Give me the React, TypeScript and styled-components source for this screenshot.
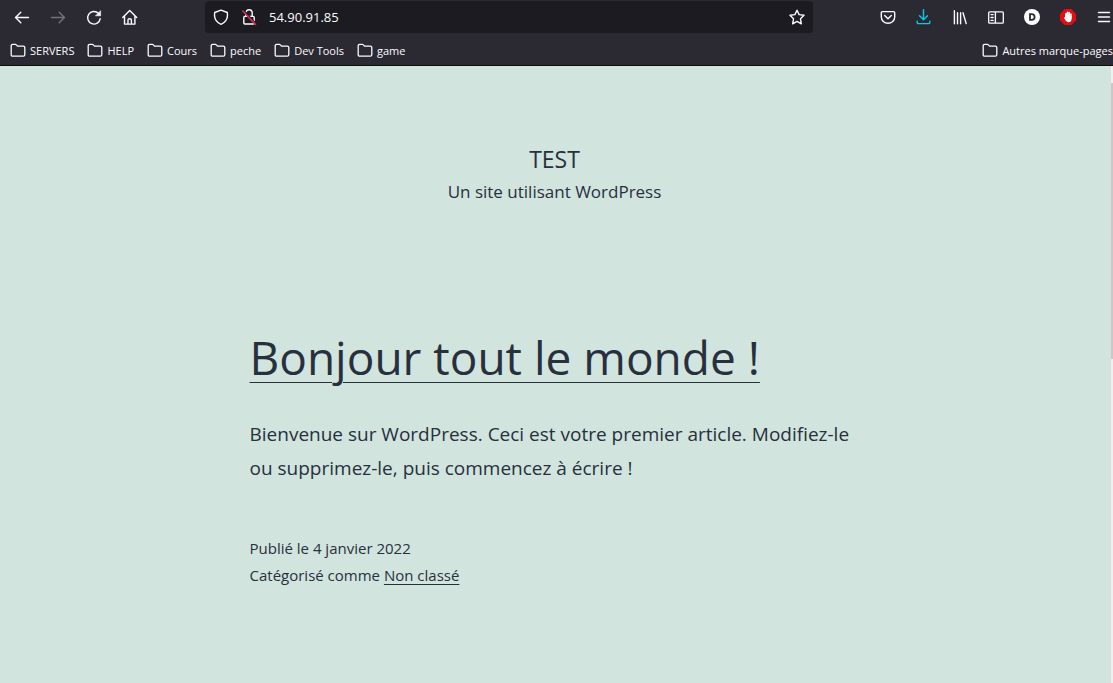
import React from "react";
import styled, { createGlobalStyle } from "styled-components";

const GlobalStyle = createGlobalStyle`
  * { box-sizing: border-box; }
  html, body { margin: 0; height: 100%; overflow: hidden; }
  #root { height: 100%; }
  body { font-family: "Open Sans", "Noto Sans", sans-serif; background: #d1e4dd; }
`;

const Window = styled.div`
  display: flex;
  flex-direction: column;
  height: 100%;
`;

const Chrome = styled.header`
  background: #2b2a33;
  border-bottom: 1px solid #0c0c0d;
  color: #fbfbfe;
  overflow: hidden;
`;

const NavBar = styled.div`
  display: flex;
  align-items: center;
  height: 34px;
  padding: 0 1px 0 14px;
`;

const ButtonGroup = styled.div`
  display: flex;
  align-items: center;
  gap: 20px;
`;

const IconButton = styled.button<{ $color?: string }>`
  display: flex;
  flex: none;
  width: 16px;
  height: 16px;
  padding: 0;
  border: 0;
  background: none;
  color: ${(p) => p.$color ?? "#fbfbfe"};
`;

const Glyph = styled.svg`
  display: block;
  flex: none;
  width: 16px;
  height: 16px;
  overflow: visible;
  fill: none;
  stroke: currentColor;
  stroke-width: 1.4;
  stroke-linecap: round;
  stroke-linejoin: round;
`;

const AddressBar = styled.div`
  display: flex;
  flex: 1;
  align-items: center;
  gap: 12px;
  height: 32px;
  margin: 0 67px;
  padding: 0 8px;
  border-radius: 4px;
  background: #1c1b22;
`;

const AddressInput = styled.input`
  flex: 1;
  min-width: 0;
  padding: 0;
  border: 0;
  outline: 0;
  background: none;
  color: #fbfbfe;
  font: 13px "Open Sans", "Noto Sans", sans-serif;
`;

const Bookmarks = styled.nav`
  display: flex;
  align-items: center;
  gap: 13px;
  height: 31px;
  padding: 2px 0 0 10px;
`;

const Bookmark = styled.a<{ $last?: boolean }>`
  display: flex;
  flex: none;
  align-items: center;
  gap: 4px;
  margin-left: ${(p) => (p.$last ? "auto" : "0")};
  color: #fbfbfe;
  font-size: 11px;
  line-height: 18px;
  text-decoration: none;
  white-space: nowrap;
`;

const Viewport = styled.div`
  display: flex;
  flex: 1;
  min-height: 0;
`;

const Page = styled.div`
  flex: 1;
  min-width: 0;
  padding: 76px 22px 0 20px;
  overflow: hidden;
  color: #28303d;
`;

const ScrollTrack = styled.div`
  width: 2px;
  padding-top: 17px;
  background: #f0f0f0;
`;

const ScrollThumb = styled.div`
  height: 46%;
  background: #c8c8c8;
`;

const SiteHeader = styled.div`
  text-align: center;
`;

const SiteTitle = styled.h1`
  margin: 0;
  font-size: 23px;
  font-weight: 400;
  line-height: 34px;
`;

const Tagline = styled.p`
  margin: 0;
  font-size: 17px;
  line-height: 32px;
`;

const Article = styled.article`
  max-width: 610px;
  margin: 118px auto 0;
`;

const ArticleTitle = styled.h2`
  margin: 0;
  font-size: 46px;
  font-weight: 400;
  line-height: 62px;
`;

const TextLink = styled.a`
  color: inherit;
  text-decoration: underline;
  text-decoration-thickness: 1px;
  text-underline-offset: 3px;
`;

const TitleLink = styled(TextLink)`
  text-underline-offset: 7px;
`;

const Excerpt = styled.p`
  margin: 29px 0 0;
  font-size: 19px;
  line-height: 34px;
`;

const Meta = styled.footer`
  margin-top: 50px;
  font-size: 15px;
  line-height: 27px;
`;

const FolderIcon = () => (
  <Glyph viewBox="0 0 16 16" aria-hidden>
    <path d="M1.2 11.7V2.8Q1.2 1.3 2.7 1.3H5.3Q6 1.3 6.4 1.8L7.5 3.1H13.3Q14.8 3.1 14.8 4.6V11.7Q14.8 13.2 13.3 13.2H2.7Q1.2 13.2 1.2 11.7Z" strokeWidth="1.3" />
  </Glyph>
);

const folders = ["SERVERS", "HELP", "Cours", "peche", "Dev Tools", "game"];

export default function App() {
  return (
    <Window>
      <GlobalStyle />
      <Chrome>
        <NavBar>
          <ButtonGroup>
            <IconButton aria-label="Précédent">
              <Glyph viewBox="0 0 16 16"><path d="M14.5 8.5H1.5M6.8 3.2L1.5 8.5l5.3 5.3" /></Glyph>
            </IconButton>
            <IconButton aria-label="Suivant" $color="#73727a">
              <Glyph viewBox="0 0 16 16"><path d="M1.5 8.5h13M9.2 3.2L14.5 8.5l-5.3 5.3" /></Glyph>
            </IconButton>
            <IconButton aria-label="Actualiser">
              <Glyph viewBox="0 0 16 16">
                <path d="M12.4 4.3A6.3 6.3 0 1 0 14.2 9.6" />
                <path d="M14.6 2V6.8H9.8Z" fill="currentColor" strokeWidth="0.6" />
              </Glyph>
            </IconButton>
            <IconButton aria-label="Accueil">
              <Glyph viewBox="0 0 16 16">
                <path d="M.7 8.5L7.7 1.5l7 7M2.5 7.1V15.1H12.9V7.1M6 14.9V11.1Q6 9.8 7.7 9.8T9.4 11.1V14.9" />
              </Glyph>
            </IconButton>
          </ButtonGroup>
          <AddressBar>
            <IconButton aria-label="Protection">
              <Glyph viewBox="0 0 16 16">
                <path d="M8 1.2L14.3 3.5Q15 8.8 12.8 11.7Q11 14.3 8 15.3Q5 14.3 3.2 11.7Q1 8.8 1.7 3.5Z" />
              </Glyph>
            </IconButton>
            <IconButton aria-label="Connexion non sécurisée">
              <Glyph viewBox="0 0 16 16">
                <path d="M4.8 6.5V4a3.2 3.2 0 0 1 6.4 0V7M3.8 7.4H12.2Q13.2 7.4 13.2 8.4V14Q13.2 15 12.2 15H3.8Q2.8 15 2.8 14V8.4Q2.8 7.4 3.8 7.4Z" />
                <path d="M2.8 1.8L14.8 14.6" stroke="#1c1b22" strokeWidth="1.8" />
                <path d="M1.8 2L14.4 15.4" stroke="#e22850" strokeWidth="1.6" />
              </Glyph>
            </IconButton>
            <AddressInput aria-label="Adresse" defaultValue="54.90.91.85" />
            <IconButton aria-label="Marquer cette page">
              <Glyph viewBox="0 0 16 16">
                <path d="M8 1.2L10.1 5.6L15 6.3L11.5 9.8L12.3 14.8L8 12.4L3.7 14.8L4.5 9.8L1 6.3L5.9 5.6Z" />
              </Glyph>
            </IconButton>
          </AddressBar>
          <ButtonGroup>
            <IconButton aria-label="Pocket">
              <Glyph viewBox="0 0 16 16">
                <path d="M2.4 2.6H13.6Q14.7 2.6 14.7 3.7V7.9A6.7 6.4 0 0 1 1.3 7.9V3.7Q1.3 2.6 2.4 2.6ZM4.7 6.6L8 9.7L11.3 6.6" />
              </Glyph>
            </IconButton>
            <IconButton aria-label="Téléchargements" $color="#00d0e4">
              <Glyph viewBox="0 0 16 16">
                <path d="M7.5 .8V10.5M3.5 6.8L7.5 10.8L11.5 6.8M1.2 12.2V13.4Q1.2 14.6 2.4 14.6H12.6Q13.8 14.6 13.8 13.4V12.2" />
              </Glyph>
            </IconButton>
            <IconButton aria-label="Bibliothèque">
              <Glyph viewBox="0 0 16 16"><path d="M2.4 1.8V14.8M5.5 3.8V14.8M8.6 3.8V14.8M11 3.8L14.2 14.6" /></Glyph>
            </IconButton>
            <IconButton aria-label="Panneaux latéraux">
              <Glyph viewBox="0 0 16 16">
                <path d="M1.6 2.9H14.4Q15.3 2.9 15.3 3.8V13.2Q15.3 14.1 14.4 14.1H1.6Q.7 14.1 .7 13.2V3.8Q.7 2.9 1.6 2.9ZM7.4 2.9V14.1M3 5.6H5.2M3 8.5H5.2M3 11.4H5.2" strokeWidth="1.3" />
              </Glyph>
            </IconButton>
            <IconButton aria-label="Dashlane">
              <Glyph viewBox="0 0 16 16">
                <circle cx="8" cy="8" r="8" fill="#fff" stroke="none" />
                <path d="M6 5.1H7.7A2.9 2.9 0 0 1 7.7 10.9H6Z" stroke="#2b2a33" strokeWidth="1.8" strokeLinejoin="miter" />
              </Glyph>
            </IconButton>
            <IconButton aria-label="Bloqueur">
              <Glyph viewBox="0 0 16 16">
                <path d="M4.7 0H11.3L16 4.7V11.3L11.3 16H4.7L0 11.3V4.7Z" fill="#e40d13" stroke="none" />
                <path d="M5.9 8V4.7M7.5 7V3.2M9.2 7V3.6M10.9 8.2V5" stroke="#fff" strokeWidth="1.6" />
                <path d="M5.1 7H11.7V9.5Q11.5 13.2 8.6 13.2Q6.8 13.2 5.8 11.8L3.9 8.8Q4.4 8 5.1 8.7Z" fill="#fff" stroke="none" />
              </Glyph>
            </IconButton>
            <IconButton aria-label="Menu">
              <Glyph viewBox="0 0 16 16"><path d="M2.5 3.5H13.5M2.5 8H13.5M2.5 12.5H13.5" /></Glyph>
            </IconButton>
          </ButtonGroup>
        </NavBar>
        <Bookmarks aria-label="Marque-pages">
          {folders.map((name) => (
            <Bookmark href="#" key={name}>
              <FolderIcon />
              {name}
            </Bookmark>
          ))}
          <Bookmark href="#" $last>
            <FolderIcon />
            Autres marque-pages
          </Bookmark>
        </Bookmarks>
      </Chrome>
      <Viewport>
        <Page>
          <SiteHeader>
            <SiteTitle>TEST</SiteTitle>
            <Tagline>Un site utilisant WordPress</Tagline>
          </SiteHeader>
          <Article>
            <ArticleTitle>
              <TitleLink href="#">Bonjour tout le monde !</TitleLink>
            </ArticleTitle>
            <Excerpt>
              Bienvenue sur WordPress. Ceci est votre premier article. Modifiez-le ou supprimez-le, puis commencez à
              écrire !
            </Excerpt>
            <Meta>
              <div>Publié le 4 janvier 2022</div>
              <div>
                Catégorisé comme <TextLink href="#">Non classé</TextLink>
              </div>
            </Meta>
          </Article>
        </Page>
        <ScrollTrack>
          <ScrollThumb />
        </ScrollTrack>
      </Viewport>
    </Window>
  );
}
